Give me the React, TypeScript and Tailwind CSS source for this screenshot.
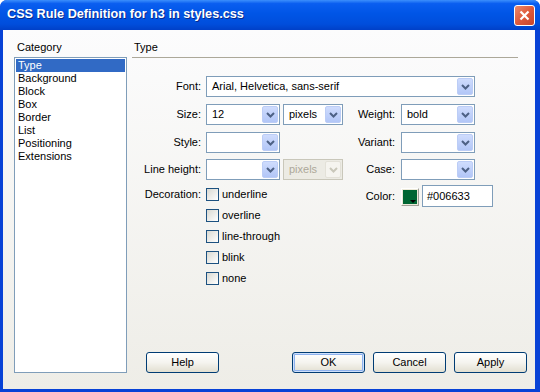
import React from 'react';

const ui = { fontFamily: '"Liberation Sans", Arial, sans-serif' };

const Chevron = ({ disabled }: { disabled?: boolean }) => (
  <svg width="9" height="6" viewBox="0 0 9 6">
    <polyline
      points="1,1 4.5,4.5 8,1"
      fill="none"
      stroke={disabled ? '#c9c7ba' : '#4d6185'}
      strokeWidth="2"
    />
  </svg>
);

const Select = ({
  value,
  width,
  disabled,
}: {
  value?: string;
  width: string;
  disabled?: boolean;
}) => (
  <div
    className={`${width} h-[21px] flex border ${
      disabled ? 'border-[#c9c7ba] bg-[#ecebe4]' : 'border-[#7f9db9] bg-white'
    }`}
  >
    <span
      className={`flex-1 pl-[5px] leading-[19px] text-[11px] truncate ${
        disabled ? 'text-[#aca899]' : 'text-black'
      }`}
    >
      {value}
    </span>
    <span
      className={`w-[16px] m-px flex items-center justify-center rounded-[2px] border ${
        disabled
          ? 'bg-[#f5f4ef] border-[#e3e1d8]'
          : 'bg-linear-to-b from-[#cfdcfd] to-[#b2c6f7] border-[#bccdf6]'
      }`}
    >
      <Chevron disabled={disabled} />
    </span>
  </div>
);

const Check = ({ label }: { label: string }) => (
  <div className="flex items-center h-[13px] gap-[3px]">
    <span className="w-[13px] h-[13px] border border-[#1c5180] bg-linear-to-br from-[#d9d9d2] to-white" />
    <span className="text-[11px] leading-[13px]">{label}</span>
  </div>
);

const Button = ({ label, isDefault }: { label: string; isDefault?: boolean }) => (
  <button
    className={`w-[73px] h-[21px] rounded-[3px] border border-[#003c74] bg-linear-to-b from-white via-[#f5f4ef] to-[#e2dfd1] text-[11px] text-black ${
      isDefault ? 'shadow-[inset_0_0_0_1px_#cee0fb,inset_0_0_0_2px_#8eb2ee]' : ''
    }`}
  >
    {label}
  </button>
);

const categories = ['Type', 'Background', 'Block', 'Box', 'Border', 'List', 'Positioning', 'Extensions'];

export default function App() {
  return (
    <div className="w-[540px] h-[392px] flex flex-col bg-[#0842d6] rounded-t-[7px] overflow-hidden" style={ui}>
      {/* title bar */}
      <div className="h-[30px] flex items-center pl-[7px] pr-[5px] bg-[linear-gradient(to_bottom,#3c8ffc_0%,#0a5ef0_12%,#0055e6_45%,#004edc_80%,#0040c8_100%)]">
        <span className="flex-1 text-white font-bold text-[12.7px] [text-shadow:1px_1px_0_#0b2a8c]">
          CSS Rule Definition for h3 in styles.css
        </span>
        <span className="w-[21px] h-[21px] rounded-[3px] border border-white bg-linear-to-br from-[#ec8a6a] via-[#df5a3c] to-[#c8452a] flex items-center justify-center">
          <svg width="11" height="11" viewBox="0 0 11 11">
            <path d="M1.5 1.5 L9.5 9.5 M9.5 1.5 L1.5 9.5" stroke="white" strokeWidth="2.2" />
          </svg>
        </span>
      </div>

      {/* body */}
      <div className="flex-1 ml-[3px] mr-[5px] mb-[3px] flex bg-linear-to-b from-[#fcfcfd] to-[#eeede7] pt-[11px] pb-[16px] text-[11px] text-black">
        {/* category column */}
        <div className="ml-[11px] w-[113px] flex flex-col">
          <div className="leading-[13px] pl-[3px] mb-[3px]">Category</div>
          <div className="flex-1 border border-[#7f9db9] bg-white p-px">
            {categories.map((c, i) => (
              <div
                key={c}
                className={`h-[13px] leading-[13px] pl-[2px] ${i === 0 ? 'bg-[#316ac5] text-white' : ''}`}
              >
                {c}
              </div>
            ))}
          </div>
        </div>

        {/* type panel */}
        <div className="ml-[5px] flex-1 flex flex-col pr-[8px]">
          <div className="mr-[9px] border-b border-[#aca899] pl-[2px] pb-[3px] leading-[13px]">Type</div>

          <div className="mt-[18px] flex flex-col">
            <div className="flex items-center">
              <span className="w-[69px] text-right">Font:</span>
              <span className="ml-[5px]">
                <Select value="Arial, Helvetica, sans-serif" width="w-[269px]" />
              </span>
            </div>

            <div className="flex items-center mt-[7px]">
              <span className="w-[69px] text-right">Size:</span>
              <div className="ml-[5px] w-[137px] flex gap-[3px]">
                <Select value="12" width="w-[74px]" />
                <Select value="pixels" width="w-[60px]" />
              </div>
              <span className="w-[52px] text-right">Weight:</span>
              <span className="ml-[6px]">
                <Select value="bold" width="w-[74px]" />
              </span>
            </div>

            <div className="flex items-center mt-[7px]">
              <span className="w-[69px] text-right">Style:</span>
              <div className="ml-[5px] w-[137px] flex">
                <Select width="w-[74px]" />
              </div>
              <span className="w-[52px] text-right">Variant:</span>
              <span className="ml-[6px]">
                <Select width="w-[74px]" />
              </span>
            </div>

            <div className="flex items-center mt-[6px]">
              <span className="w-[69px] text-right">Line height:</span>
              <div className="ml-[5px] w-[137px] flex gap-[3px]">
                <Select width="w-[74px]" />
                <Select value="pixels" width="w-[60px]" disabled />
              </div>
              <span className="w-[52px] text-right">Case:</span>
              <span className="ml-[6px]">
                <Select width="w-[74px]" />
              </span>
            </div>

            <div className="flex items-start mt-[5px]">
              <span className="w-[69px] text-right mt-[3px] leading-[13px]">Decoration:</span>
              <div className="ml-[5px] w-[137px] mt-[3px] flex flex-col gap-[8px]">
                <Check label="underline" />
                <Check label="overline" />
                <Check label="line-through" />
                <Check label="blink" />
                <Check label="none" />
              </div>
              <div className="flex items-center h-[22px]">
                <span className="w-[52px] text-right">Color:</span>
                <span className="ml-[6px] w-[18px] h-[18px] mt-[2px] border border-t-white border-l-white border-r-[#a09f97] border-b-[#a09f97] bg-[#ece9d8] p-[1px]">
                  <span className="relative block w-full h-full bg-[#006633]">
                    <span className="absolute right-[1px] bottom-[1px] w-0 h-0 border-l-[3px] border-r-[3px] border-t-[3px] border-l-transparent border-r-transparent border-t-black" />
                  </span>
                </span>
                <span className="ml-[3px] w-[71px] h-[22px] border border-[#7f9db9] bg-white pl-[4px] leading-[20px]">
                  #006633
                </span>
              </div>
            </div>
          </div>

          <div className="flex-1" />

          <div className="flex items-center">
            <span className="ml-[14px]">
              <Button label="Help" />
            </span>
            <div className="flex-1" />
            <div className="flex gap-[8px]">
              <Button label="OK" isDefault />
              <Button label="Cancel" />
              <Button label="Apply" />
            </div>
          </div>
        </div>
      </div>
    </div>
  );
}
